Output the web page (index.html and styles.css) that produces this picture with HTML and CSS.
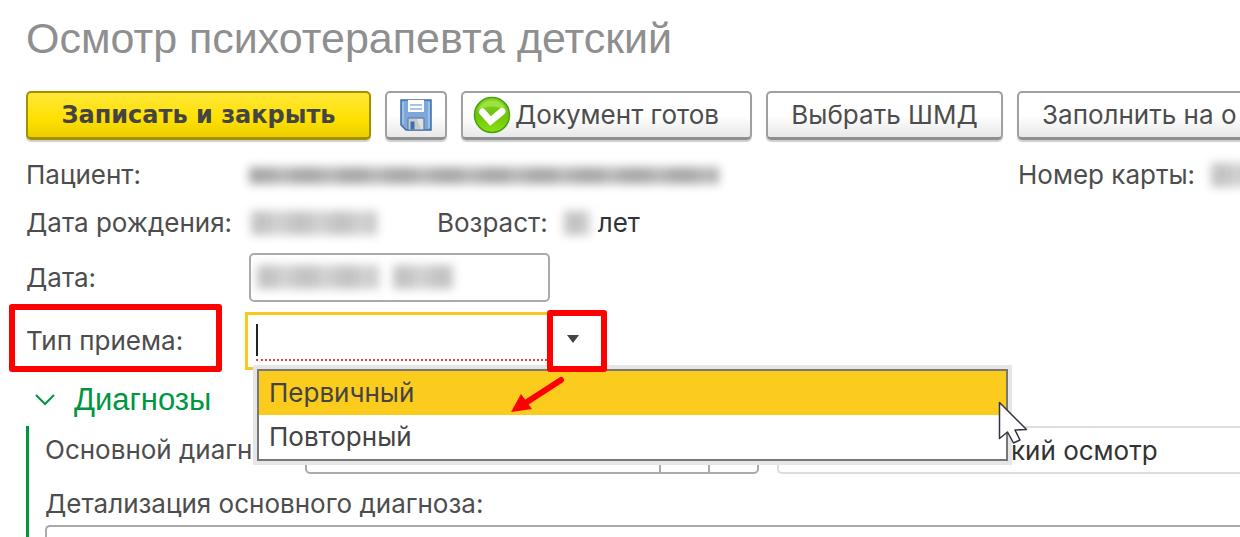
FILE: index.html
```html
<!DOCTYPE html>
<html lang="ru">
<head>
    <meta charset="utf-8">
    <title>Осмотр психотерапевта детский</title>
    <link rel="stylesheet" href="styles.css">
</head>
<body>
    <div class="content">
        <h1>Осмотр психотерапевта детский</h1>

        <div class="toolbar">
            <button type="button" class="btn btn-primary">Записать и закрыть</button>
            <button type="button" class="btn btn-icon" aria-label="Записать">
                <svg width="32" height="32" viewBox="0 0 32 32">
                    <path d="M1 1h30v30H6l-5-5z" fill="#7da7db" stroke="#3d6da6" stroke-width="1.5"/>
                    <path d="M3 3v22M29 3v26" stroke="#a9c8ec" stroke-width="1.5"/>
                    <path d="M8 1h16v12H8z" fill="#fff"/>
                    <path d="M10 6h12M10 10h12" stroke="#8fb2dc" stroke-width="1.5"/>
                    <path d="M8 19h16v12H8z" fill="#c3cbcb" stroke="#56789f"/>
                    <path d="M10.500 22.500h4v8h-4z" fill="#3b6fb0"/>
                    <path d="M17 20h6v10h-2z" fill="#dde1df"/>
                </svg>
            </button>
            <button type="button" class="btn btn-ready">
                <svg width="38" height="38" viewBox="0 0 38 38">
                    <defs>
                        <linearGradient id="ball" x1="0" y1="0" x2="0" y2="1">
                            <stop offset="0" stop-color="#8ad820"/>
                            <stop offset=".5" stop-color="#6cc40c"/>
                            <stop offset="1" stop-color="#8ce010"/>
                        </linearGradient>
                    </defs>
                    <circle cx="19" cy="19" r="17.500" fill="url(#ball)" stroke="#48a010" stroke-width="1.500"/>
                    <path d="M5 15C8 1 30 1 33 15C24 9 14 9 5 15z" fill="#b4ec60" opacity=".6"/>
                    <path d="M9.500 16l8 9L29 15.500" fill="none" stroke="#fff" stroke-width="7" stroke-linecap="round"/>
                </svg>
                Документ готов
            </button>
            <button type="button" class="btn btn-template">Выбрать ШМД</button>
            <button type="button" class="btn btn-last">Заполнить на о</button>
        </div>

        <div class="row row-patient">
            <span class="name">Пациент:</span>
            <span class="masked masked-patient"></span>
            <span class="card-number">Номер карты:</span>
            <span class="masked masked-card"></span>
        </div>

        <div class="row row-birth">
            <span class="name">Дата рождения:</span>
            <span class="masked masked-birth"></span>
            <span class="age">Возраст:</span>
            <span class="masked masked-age"></span>
            <span class="value">лет</span>
        </div>

        <div class="row row-date">
            <label class="name" for="date">Дата:</label>
            <div class="date-field">
                <input type="text" id="date">
                <span class="masked masked-day"></span>
                <span class="masked masked-time"></span>
            </div>
        </div>

        <div class="row row-type">
            <label class="name marked" for="visitType">Тип приема:</label>
            <div class="combo">
                <div class="combo-field">
                    <input type="text" id="visitType" role="combobox" aria-expanded="true" aria-controls="visitTypes">
                    <span class="caret"></span>
                </div>
                <button type="button" class="combo-btn" aria-label="Выбрать тип приема">
                    <svg width="12" height="8" viewBox="0 0 12 8"><path d="M0 0h12L6 8z" fill="#444"/></svg>
                </button>
                <ul class="options" id="visitTypes" role="listbox">
                    <li role="option" aria-selected="true">Первичный</li>
                    <li role="option" aria-selected="false">Повторный</li>
                </ul>
                <svg class="arrow" width="54" height="38" viewBox="0 0 54 38">
                    <path d="M50 4L16 26" stroke="#f00" stroke-width="6" stroke-linecap="round"/>
                    <path d="M0 36L10 18L21 33z" fill="#f00"/>
                </svg>
                <svg class="cursor" width="30" height="44" viewBox="0 0 30 44">
                    <path d="M1.500 1.500V37.500L9.500 31L15.500 42L22 39L17 29L28.500 28.500z" fill="#fff" stroke="#334" stroke-width="1.500" stroke-linejoin="round"/>
                </svg>
            </div>
        </div>

        <h2>
            <svg width="20" height="12" viewBox="0 0 20 12"><path d="M1 1l9 9l9-9" fill="none" stroke="#009640" stroke-width="2"/></svg>
            Диагнозы
        </h2>

        <div class="group">
            <div class="row row-diagnosis">
                <label class="diagnosis-label" for="diagnosis">Основной диагноз:</label>
                <div class="picker">
                    <input type="text" id="diagnosis">
                    <button type="button" aria-label="Выбрать из списка"></button>
                    <button type="button" aria-label="Открыть"></button>
                </div>
                <input type="text" class="exam" value="кий осмотр" aria-label="Вид осмотра" readonly>
            </div>
            <label class="details-label" for="details">Детализация основного диагноза:</label>
            <textarea id="details"></textarea>
        </div>
    </div>
</body>
</html>
```

FILE: styles.css
```css
* {
    box-sizing: border-box;
}
body {
    font-family: Inter, "Liberation Sans", Arial, sans-serif;
    font-size: 26px;
    line-height: 30px;
    background: #fff;
    color: #4d4d4d;
    margin: 0;
    overflow: hidden;
}
input, button, textarea {
    font: inherit;
    color: inherit;
}
svg {
    flex: none;
}
h1, h2 {
    font-family: "Liberation Sans", Arial, sans-serif;
    font-weight: normal;
}
.content {
    height: 100vh;
    overflow: hidden;
    padding: 14px 0 0 26px;
}
h1 {
    margin: 0 0 29px;
    font-size: 43px;
    line-height: 48px;
    color: #8f8f8f;
}
.toolbar {
    display: flex;
    gap: 14px;
    overflow: hidden;
    padding-bottom: 4px;
}
.btn {
    flex: none;
    display: flex;
    align-items: center;
    justify-content: center;
    height: 49px;
    padding: 0 23px;
    white-space: nowrap;
    border: 2px solid #a0a0a0;
    border-bottom: 3px solid #8f8f8f;
    border-radius: 5px;
    background: linear-gradient(#fff 50%, #e8e8e8);
    box-shadow: 0 2px 1px #d0d0d0;
}
.btn-primary {
    width: 345px;
    font-family: "DejaVu Sans", Verdana, sans-serif;
    font-size: 24px;
    font-weight: bold;
    color: #444;
    border-color: #a38f00;
    background: linear-gradient(#ffe838, #ffe000 60%, #ebcf00);
}
.btn-icon {
    width: 62px;
    padding: 0;
}
.btn-ready {
    justify-content: flex-start;
    min-width: 291px;
    padding: 0 16px 0 10px;
    gap: 4px;
}
.btn-template {
    min-width: 237px;
}
.btn-last {
    padding-right: 60px;
}
.row {
    display: flex;
    align-items: center;
}
.name {
    flex: none;
    width: 223px;
}
.value {
    color: #333;
}
/* hidden personal data */
.masked {
    flex: none;
    height: 24px;
    filter: blur(5px);
    background: repeating-linear-gradient(90deg, #c4c4c4 0 16px, #d2d2d2 24px 30px, #c8c8c8 41px);
}
.row-patient {
    height: 30px;
    margin-top: 16px;
}
.masked-patient {
    width: 470px;
    height: 17px;
    background: repeating-linear-gradient(90deg, #a8a8a8 0 20px, #b8b8b8 30px 36px, #acacac 47px);
}
.card-number {
    flex: none;
    margin-left: 299px;
}
.masked-card {
    width: 40px;
    margin-left: 16px;
}
.row-birth {
    height: 30px;
    margin-top: 18px;
}
.masked-birth {
    width: 126px;
    margin-left: 2px;
}
.age {
    margin-left: 60px;
}
.masked-age {
    width: 26px;
    margin: 0 8px 0 16px;
}
.row-date {
    margin-top: 15px;
}
.date-field {
    position: relative;
    display: flex;
}
.date-field input {
    width: 301px;
    height: 49px;
    border: 2px solid #aaa;
    border-radius: 5px;
}
.masked-day, .masked-time {
    position: absolute;
    top: 12px;
    left: 8px;
    width: 122px;
}
.masked-time {
    left: 144px;
    width: 60px;
}
.row-type {
    margin-top: 8px;
}
.marked {
    position: relative;
}
.marked::before {
    content: "";
    position: absolute;
    inset: -22px 27px -16px -17px;
    border: 6px solid #f00;
    border-radius: 3px;
}
.combo {
    position: relative;
    display: flex;
    align-items: center;
    margin-left: -4px;
}
.combo-field {
    position: relative;
    height: 58px;
    padding: 6px 0 6px 8px;
    border: 3px solid #fac81e;
    border-right: 0;
}
.combo-field input {
    display: block;
    width: 291px;
    height: 40px;
    padding: 0;
    border: 0;
    border-bottom: 2px dotted #f04040;
    outline: none;
}
.caret {
    position: absolute;
    left: 8px;
    top: 9px;
    width: 2px;
    height: 32px;
    background: #222;
}
.combo-btn {
    position: relative;
    z-index: 2;
    display: flex;
    align-items: center;
    justify-content: center;
    width: 60px;
    height: 62px;
    padding: 0 8px 4px 0;
    border: 6px solid #f00;
    border-radius: 3px;
    background: #fff;
}
.options {
    position: absolute;
    z-index: 1;
    left: 12px;
    top: 59px;
    width: 751px;
    margin: 0;
    padding: 0;
    list-style: none;
    background: #fff;
    border: 2px solid #777;
    box-shadow: 0 0 0 4px #e6e6e6;
    color: #444;
}
.options li {
    height: 44px;
    padding: 7px 10px;
}
.options li[aria-selected="true"] {
    background: #fbcb1e;
}
.arrow, .cursor {
    position: absolute;
    z-index: 3;
    left: 266px;
    top: 66px;
}
.cursor {
    left: 753px;
    top: 91px;
}
h2 {
    display: flex;
    align-items: center;
    gap: 19px;
    margin: 11px 0 9px;
    padding-left: 9px;
    font-size: 31px;
    line-height: 34px;
    color: #009640;
}
.group {
    border-left: 3px solid #009640;
    padding-left: 16px;
}
.diagnosis-label {
    flex: none;
    width: 260px;
}
.picker {
    flex: none;
    display: flex;
    width: 454px;
    height: 48px;
    margin-right: 18px;
    border: 2px solid #aaa;
    border-radius: 5px;
}
.picker input {
    flex: 1;
    min-width: 0;
    border: 0;
    background: none;
}
.picker button {
    width: 49px;
    border: 0;
    border-left: 2px solid #aaa;
    background: none;
}
.exam {
    flex: 1;
    min-width: 0;
    height: 48px;
    padding: 0 0 0 232px;
    border: 2px solid #ddd;
    border-right: 0;
    border-radius: 5px 0 0 5px;
    color: #333;
}
.details-label {
    display: block;
    margin: 15px 0 6px;
}
textarea {
    display: block;
    width: 100%;
    height: 60px;
    border: 2px solid #aaa;
    border-right: 0;
    border-radius: 5px 0 0 0;
    resize: none;
}
```
